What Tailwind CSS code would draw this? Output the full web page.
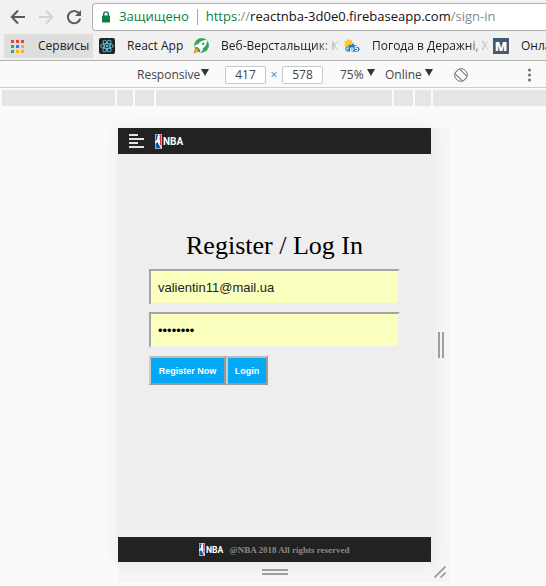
<!DOCTYPE html>
<html lang="uk">
<head>
<meta charset="utf-8">
<meta name="viewport" content="width=device-width, initial-scale=1">
<title>NBA – Sign in</title>
<script src="https://cdn.jsdelivr.net/npm/@tailwindcss/browser@4"></script>
</head>
<body class="flex min-h-screen flex-col overflow-hidden bg-[#fafafa] font-['Open_Sans','Noto_Sans',sans-serif] text-xs text-[#222]">

<svg class="hidden" aria-hidden="true">
  <symbol id="nba-emblem" viewBox="0 0 7 15">
    <rect width="7" height="15" rx="1.2" fill="#fff"/>
    <path d="M1.2.6H3.6L2.2 3.2 2.4 5.2.5 7.5V1.3Q.5.6 1.2.6ZM.5 9.5 2.5 8 3.6 10 6 14.4H1.2Q.5 14.4.5 13.7Z" fill="#1557a8"/>
    <path d="M4.2.6H5.8Q6.5.6 6.5 1.3V13.4L4.8 9.8 5.2 6.4 4.4 4.8 5 3Z" fill="#d5263d"/>
  </symbol>
</svg>

<header class="bg-[#f1f1f1]">
  <div class="flex h-[34px] items-center pl-[10px]">
    <nav class="flex shrink-0 gap-3 pr-[10px]" aria-label="Навігація">
      <button aria-label="Назад" class="size-4"><svg viewBox="0 0 16 16" fill="none" stroke="#5a5a5a" stroke-width="2"><path d="M15 8H2M8 1.5 1.8 8 8 14.5"/></svg></button>
      <button aria-label="Вперед" class="size-4"><svg viewBox="0 0 16 16" fill="none" stroke="#d2d2d2" stroke-width="2"><path d="M1 8H14M8 1.5 14.2 8 8 14.5"/></svg></button>
      <button aria-label="Оновити" class="size-4"><svg viewBox="0 0 16 16"><path d="M13 4.2A6.2 6.2 0 1 0 14.2 9.5" fill="none" stroke="#5a5a5a" stroke-width="2"/><path d="M15 1V7H9Z" fill="#5a5a5a"/></svg></button>
    </nav>
    <div class="flex h-7 min-w-0 flex-1 items-center rounded-l border border-r-0 border-[#b0b0b0] bg-white pl-[9px] text-[13px]">
      <svg class="mr-[9px] h-3 w-2 shrink-0" viewBox="0 0 8 12"><rect y="4.5" width="8" height="7" rx=".8" fill="#0b8043"/><path d="M1.7 5V3.2a2.3 2.3 0 0 1 4.6 0V5" fill="none" stroke="#0b8043" stroke-width="1.4"/></svg>
      <span class="shrink-0 text-[#0b8043]">Защищено</span>
      <span class="mx-2 h-4 w-px shrink-0 bg-[#a8a8a8]"></span>
      <span class="whitespace-nowrap text-[#111]"><span class="text-[#0b8043]">https</span><span class="text-[#7a9a88]">://</span>reactnba-3d0e0.firebaseapp.com<span class="text-[#888]">/sign-in</span></span>
    </div>
  </div>
  <nav class="flex h-[27px] items-start overflow-hidden border-b border-[#b3b3b3] pl-1 whitespace-nowrap text-[#1b1b1b]" aria-label="Закладки">
    <a href="#" class="flex h-6 w-[89px] shrink-0 items-center gap-[14px] bg-[#dedede] pl-[7px]">
      <svg class="size-[13px] shrink-0" viewBox="0 0 13 13"><path d="M0 0h3v3H0zM5 0h3v3H5zM10 0h3v3h-3z" fill="#ea4335"/><path d="M0 5h3v3H0zM0 10h3v3H0z" fill="#34a853"/><path d="M5 5h3v3H5z" fill="#2b7de9"/><path d="M10 5h3v3h-3zM5 10h3v3H5zM10 10h3v3h-3z" fill="#fbb30a"/></svg>
      Сервисы
    </a>
    <a href="#" class="flex h-6 w-[94px] shrink-0 items-center gap-3 pl-[6px]">
      <svg class="size-4 shrink-0" viewBox="0 0 16 16"><rect width="16" height="16" rx="2" fill="#222"/><g fill="none" stroke="#61c8e4" stroke-width=".9"><ellipse cx="8" cy="8" rx="6.5" ry="2.5"/><ellipse cx="8" cy="8" rx="6.5" ry="2.5" transform="rotate(60 8 8)"/><ellipse cx="8" cy="8" rx="6.5" ry="2.5" transform="rotate(120 8 8)"/></g><circle cx="8" cy="8" r="1.2" fill="#61c8e4"/></svg>
      React App
    </a>
    <a href="#" class="flex h-6 w-[149px] shrink-0 items-center gap-3 pl-[6px]">
      <svg class="size-4 shrink-0" viewBox="0 0 16 16"><circle cx="8.6" cy="7.4" r="7.3" fill="#36a852"/><path d="M14 2Q8 2 5.2 6L2.6 7 1.5 9.3 4.4 9 7.2 11.6 7 14.2 9.3 13 10 10.3Q14 7.5 14 2Z" fill="#fff"/><circle cx="10.2" cy="5.8" r="1.3" fill="#36a852"/><path d="M4.8 10 2 11 .3 15.5 4.8 13.8 6 11.4Z" fill="#f27620"/><path d="m4.3 11-1.8 1-.8 2 2-.8Z" fill="#ffcf25"/></svg>
      <span class="bg-linear-to-r from-[#1b1b1b] from-80% to-[#e4e4e4] to-100% bg-clip-text text-transparent">Веб-Верстальщик: К</span>
    </a>
    <a href="#" class="flex h-6 w-[150px] shrink-0 items-center gap-3 pl-2">
      <svg class="size-4 shrink-0" viewBox="0 0 16 16"><path d="m5 1 1 1.5L8 2v2l2 1-1 5H2L0 7l1.3-1.2L0 3l2.5.2L3 1l1.3 1Z" fill="#ffc629"/><path d="M3 13.5Q1 13 1.2 10.6 2 8.6 4 8.6 4.7 6.4 7 7q2-2 3.8.5 2-.7 2.7 1.3Q16 9.5 15.5 12q-.6 1.7-2.5 1.7Z" fill="#1684c8"/><path d="M3 12.5V10h2M6.7 15v-5H9v2.4H7M13.7 8.7H11v1.7h2.5v2.2H11" fill="none" stroke="#fff"/></svg>
      <span class="bg-linear-to-r from-[#1b1b1b] from-80% to-[#e4e4e4] to-100% bg-clip-text text-transparent">Погода в Деражні, Х</span>
    </a>
    <a href="#" class="flex h-6 shrink-0 items-center gap-3 pl-[7px]">
      <svg class="size-4 shrink-0" viewBox="0 0 16 16"><rect width="16" height="16" fill="#3f5a73"/><text x="8" y="13" text-anchor="middle" font-family="Open Sans, sans-serif" font-size="13" font-weight="800" fill="#fff">M</text></svg>
      Онла
    </a>
  </nav>
</header>

<section class="flex h-[27px] shrink-0 items-center border-b border-[#ccc] pt-px pl-[137px] text-xs text-[#444]" aria-label="Device toolbar">
  <button class="flex w-[88px] items-center gap-px">Responsive<svg class="mb-1 h-[7px] w-2" viewBox="0 0 8 7"><path d="M0 0h8L4 7Z" fill="#333"/></svg></button>
  <input aria-label="Width" value="417" class="h-[18px] w-[41px] rounded-xs border border-[#c8c8c8] bg-white text-center">
  <span class="w-4 text-center text-[#3d82a8]">×</span>
  <input aria-label="Height" value="578" class="h-[18px] w-[41px] rounded-xs border border-[#c8c8c8] bg-white text-center">
  <button class="ml-[17px] flex w-[45px] items-center gap-[3px]">75%<svg class="mb-1 h-[7px] w-2" viewBox="0 0 8 7"><path d="M0 0h8L4 7Z" fill="#333"/></svg></button>
  <button class="flex w-[69px] items-center gap-[3px]">Online<svg class="mb-1 h-[7px] w-2" viewBox="0 0 8 7"><path d="M0 0h8L4 7Z" fill="#333"/></svg></button>
  <button aria-label="Rotate" class="size-[14px]"><svg viewBox="0 0 14 14" fill="none" stroke="#777"><rect x="3.7" y="1.2" width="6.6" height="11.6" rx="1" transform="rotate(-45 7 7)"/><path d="M6 .7A6.4 6.4 0 0 1 13.3 8M8 13.3A6.4 6.4 0 0 1 .7 6"/></svg></button>
  <button aria-label="More options" class="mr-[15px] ml-auto h-[14px] w-[3px]"><svg viewBox="0 0 3 14" fill="#6e6e6e"><circle cx="1.5" cy="2" r="1.5"/><circle cx="1.5" cy="7" r="1.5"/><circle cx="1.5" cy="12" r="1.5"/></svg></button>
</section>

<div class="mt-[2px] flex h-4 shrink-0 gap-[2px] pl-[2px] [&>*]:bg-[#e5e5e5]" aria-hidden="true">
  <span class="flex-1"></span><span class="w-4"></span><span class="w-[19px]"></span><span class="w-[236px]"></span><span class="w-[19px]"></span><span class="w-4"></span><span class="flex-1"></span>
</div>

<div class="mt-[22px] grid grid-cols-[1fr_minmax(0,313px)_1fr] pl-[3px]">
  <main class="col-start-2 flex min-h-[434px] flex-col bg-[#eee] font-['Liberation_Serif',serif] shadow-[0_0_16px_rgba(0,0,0,0.08)]">
    <div class="flex h-[26px] items-center bg-[#222] pl-[11px]">
      <button aria-label="Menu" class="mr-[11px] h-[14px] w-[15px]"><svg viewBox="0 0 15 14" fill="#e0e4e0"><path d="M0 0h9v2H0zM0 4h15v2H0zM0 8h9v2H0zM0 12h15v2H0z"/></svg></button>
      <a href="#" aria-label="NBA" class="flex h-4 items-center"><svg class="h-[15px] w-[29px]" viewBox="0 0 29 15"><use href="#nba-emblem" width="7" height="15"/><text x="8" y="11" font-family="Roboto, sans-serif" font-size="10" font-weight="700" fill="#fff">NBA</text></svg></a>
    </div>
    <form class="flex flex-1 flex-col px-[31px] pt-[76px]">
      <h1 class="text-center text-[26px] leading-8 text-black">Register / Log In</h1>
      <input type="email" aria-label="Email" value="valientin11@mail.ua" class="mt-[7px] h-9 w-full border-2 border-t-[#a4a4a4] border-r-[#eee] border-b-[#eee] border-l-[#a4a4a4] bg-[#faffbd] px-[7px] font-['Liberation_Sans',sans-serif] text-[13px] text-[#222]">
      <input type="password" aria-label="Password" value="12345678" class="mt-[7px] h-9 w-full border-2 border-t-[#a4a4a4] border-r-[#eee] border-b-[#eee] border-l-[#a4a4a4] bg-[#faffbd] px-[7px] font-['Liberation_Sans',sans-serif] text-[13px] text-black">
      <div class="mt-2 flex font-['Liberation_Sans',sans-serif] text-[9px] font-bold text-white">
        <button type="button" class="h-[29px] w-[77px] border-2 border-t-[#bbb] border-r-[#999] border-b-[#999] border-l-[#ccc] bg-[#03a9f4] whitespace-nowrap">Register Now</button>
        <button type="button" class="h-[29px] w-[42px] border-2 border-t-[#bbb] border-r-[#999] border-b-[#999] border-l-[#ccc] bg-[#03a9f4]">Login</button>
      </div>
    </form>
    <footer class="flex h-[25px] items-center justify-center gap-[5px] bg-[#222] text-[9px] font-bold text-[#888]">
      <svg class="h-[13px] w-[25px]" viewBox="0 0 29 15"><use href="#nba-emblem" width="7" height="15"/><text x="8" y="11" font-family="Roboto, sans-serif" font-size="10" font-weight="700" fill="#fff">NBA</text></svg>
      <span>@NBA 2018 All rights reserved</span>
    </footer>
  </main>
  <div class="flex w-[19px] items-center justify-center bg-black/2" aria-hidden="true"><span class="h-[26px] w-[6px] border-x-2 border-[#9e9e9e]"></span></div>
  <div class="col-start-2 flex h-5 items-center justify-center bg-black/2" aria-hidden="true"><span class="h-[6px] w-[26px] border-y-2 border-[#9e9e9e]"></span></div>
  <div class="flex h-5 w-[19px] items-center bg-black/2 pl-[3px]" aria-hidden="true"><svg class="size-3" viewBox="0 0 12 12" stroke="#999" stroke-width="1.7"><path d="M.5 11.5 11.5.5M6.5 11.5l5-5"/></svg></div>
</div>
</body>
</html>
